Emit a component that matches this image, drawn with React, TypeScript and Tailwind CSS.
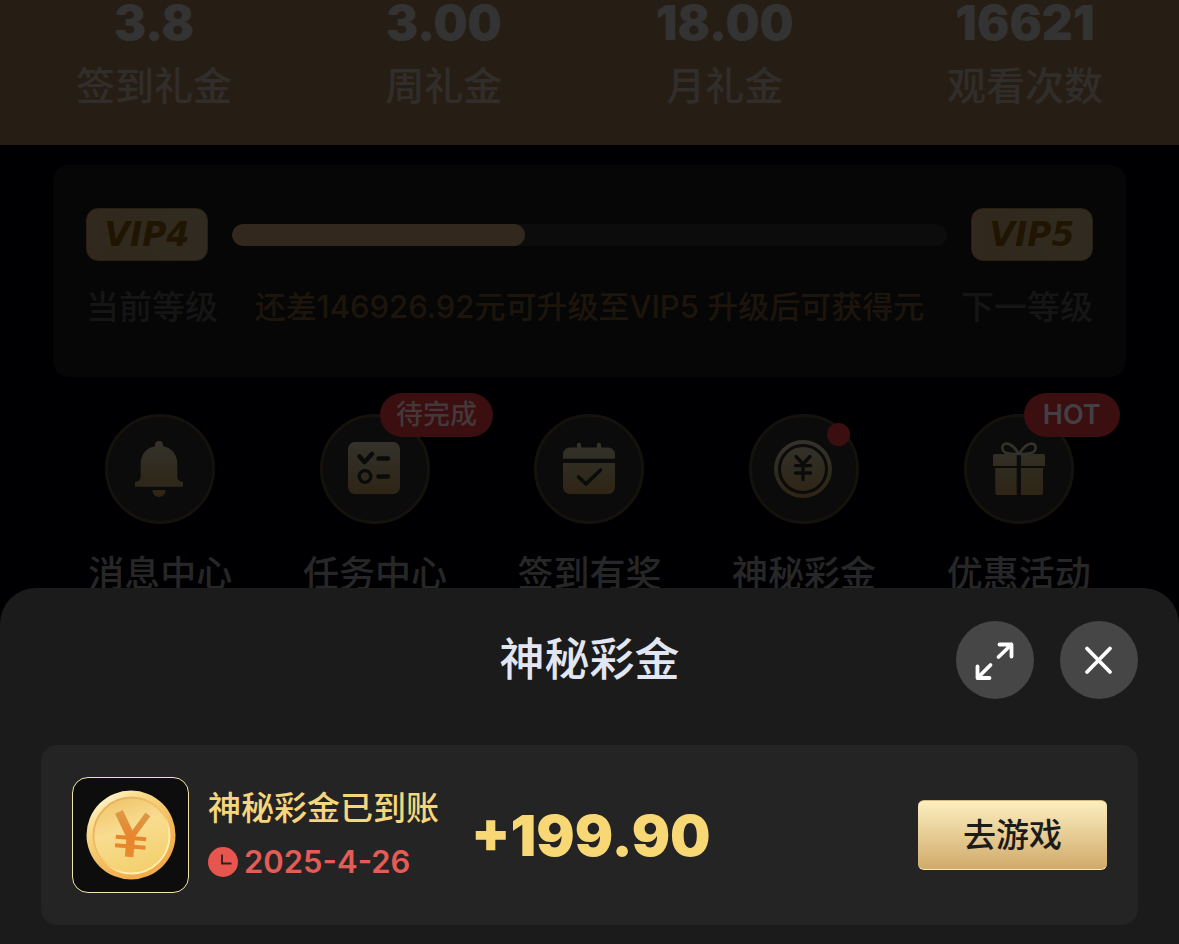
import React from "react";
import { clsx } from "clsx";

interface StatItem {
    value: string;
    label: string;
}

interface MenuItem {
    label: string;
    icon: React.ReactNode;
    badge?: string;
    dot?: boolean;
}

const stats: StatItem[] = [
    { value: "3.8", label: "签到礼金" },
    { value: "3.00", label: "周礼金" },
    { value: "18.00", label: "月礼金" },
    { value: "16621", label: "观看次数" },
];

const GOLD = "url(#menu-gold)";
const CUT = "#0b0b0b";

// Shared gradient, spans the same height in every menu icon
function MenuIcon({ children }: { children: React.ReactNode }) {
    return (
        <svg viewBox="3 3 104 104" className="size-full" aria-hidden="true">
            <defs>
                <linearGradient id="menu-gold" gradientUnits="userSpaceOnUse" x1="0" y1="28" x2="0" y2="82">
                    <stop offset="0" stopColor="#34322b" />
                    <stop offset="0.6" stopColor="#2f2a1d" />
                    <stop offset="1" stopColor="#302415" />
                </linearGradient>
            </defs>
            {children}
        </svg>
    );
}

function BellIcon() {
    return (
        <MenuIcon>
            <path
                fill={GOLD}
                d="M54 27a4 4 0 0 1 4 4v1.2c8.500 1.600 14.300 8.300 14.300 17V62c0 3.500 1.500 5.500 5.700 6v4.700H30V68c4.200-.5 5.700-2.500 5.700-6V49.200c0-8.700 5.800-15.400 14.300-17V31a4 4 0 0 1 4-4z"
            />
            <path fill={GOLD} d="M47.300 76h13.400a6.700 7 0 0 1-13.400 0z" />
        </MenuIcon>
    );
}

function TaskIcon() {
    return (
        <MenuIcon>
            <rect x="28" y="28" width="52" height="52" rx="7" fill={GOLD} />
            <g fill="none" stroke={CUT} strokeWidth="4.5" strokeLinecap="round" strokeLinejoin="round">
                <path d="M39.500 42.500l5 5.500 7.500-8M58.500 44.500h9.500M58.500 62.500h9.500" />
                <circle cx="45" cy="62.500" r="5.800" strokeWidth="3.300" />
            </g>
        </MenuIcon>
    );
}

function CalendarIcon() {
    return (
        <MenuIcon>
            <path d="M45 31v5M65 31v5" stroke="#34322b" strokeWidth="4.300" strokeLinecap="round" />
            <path fill={GOLD} d="M36 33.500h38a7 7 0 0 1 7 7v4.200H29v-4.200a7 7 0 0 1 7-7zM29 49h52v24a7 7 0 0 1-7 7H36a7 7 0 0 1-7-7z" />
            <path
                d="M44.500 63l7.500 7 14.500-14"
                fill="none"
                stroke={CUT}
                strokeWidth="3.600"
                strokeLinecap="round"
                strokeLinejoin="round"
            />
        </MenuIcon>
    );
}

function BonusIcon() {
    return (
        <MenuIcon>
            <circle cx="54" cy="55" r="29" fill={GOLD} />
            <g fill="none" stroke={CUT} strokeWidth="3" strokeLinecap="round" strokeLinejoin="round">
                <circle cx="54" cy="55" r="23.500" />
                <path d="M47 42.500l7 7.500 7-7.500M46.500 51.700h15M46.500 59h15M54 50v15.500" strokeWidth="3.300" />
            </g>
        </MenuIcon>
    );
}

function GiftIcon() {
    return (
        <MenuIcon>
            <path
                d="M55 40c-5-8-10-10.800-13.500-10.300-3.700.6-4.300 6-1 8.300C43.500 40 50 40 55 40zM55 40c5-8 10-10.800 13.500-10.300 3.700.6 4.300 6 1 8.300C66.500 40 60 40 55 40z"
                fill="none"
                stroke="#34322b"
                strokeWidth="2.600"
            />
            <path
                fill={GOLD}
                d="M31 40h21.700v12H29V42a2 2 0 0 1 2-2zM57 40h22a2 2 0 0 1 2 2v10H57zM31.300 54h21.400v27H33.300a2 2 0 0 1-2-2zM57 54h22v25a2 2 0 0 1-2 2H57z"
            />
        </MenuIcon>
    );
}

function CoinIcon() {
    return (
        <svg viewBox="0 0 90 90" className="size-[90px]" aria-hidden="true">
            <defs>
                <linearGradient id="coin-rim" x1="0.2" y1="0.05" x2="0.8" y2="0.95">
                    <stop offset="0" stopColor="#fff6cf" />
                    <stop offset="0.2" stopColor="#f9dc8c" />
                    <stop offset="0.6" stopColor="#f3bb5c" />
                    <stop offset="1" stopColor="#f2a848" />
                </linearGradient>
                <linearGradient id="coin-edge" x1="0.15" y1="0.1" x2="0.85" y2="0.9">
                    <stop offset="0" stopColor="#e9ae5a" />
                    <stop offset="0.55" stopColor="#f3c46c" />
                    <stop offset="0.8" stopColor="#fff3b8" />
                    <stop offset="1" stopColor="#fff0b0" />
                </linearGradient>
                <linearGradient id="coin-face" x1="0.3" y1="0" x2="0.65" y2="1">
                    <stop offset="0" stopColor="#f1c56c" />
                    <stop offset="0.4" stopColor="#f8dc90" />
                    <stop offset="1" stopColor="#f3d06b" />
                </linearGradient>
                <linearGradient id="coin-sign" gradientUnits="userSpaceOnUse" x1="45" y1="22" x2="45" y2="68">
                    <stop offset="0" stopColor="#dc9a45" />
                    <stop offset="0.55" stopColor="#e8842c" />
                    <stop offset="1" stopColor="#ea8a2e" />
                </linearGradient>
            </defs>
            <circle cx="45" cy="45" r="44.500" fill="url(#coin-rim)" />
            <circle cx="45.500" cy="45.500" r="38" fill="url(#coin-face)" stroke="url(#coin-edge)" strokeWidth="1.800" />
            <g fill="none" stroke="url(#coin-sign)" transform="rotate(5 45 45)">
                <path d="M31 23L44.500 46" strokeWidth="8.500" />
                <path d="M60 23L46 46" strokeWidth="6" />
                <path d="M45 42v25" strokeWidth="8.500" />
                <path d="M30 48h30.500M30 56.500h30.500" strokeWidth="4" />
            </g>
        </svg>
    );
}

function ClockIcon() {
    return (
        <svg viewBox="0 0 30 30" className="size-[30px]" aria-hidden="true">
            <circle cx="15" cy="15" r="15" fill="#e8554f" />
            <path d="M14 7.500V16.500h9.500" fill="none" stroke="#242424" strokeWidth="1.800" />
        </svg>
    );
}

const menus: MenuItem[] = [
    { label: "消息中心", icon: <BellIcon /> },
    { label: "任务中心", icon: <TaskIcon />, badge: "待完成" },
    { label: "签到有奖", icon: <CalendarIcon /> },
    { label: "神秘彩金", icon: <BonusIcon />, dot: true },
    { label: "优惠活动", icon: <GiftIcon />, badge: "HOT" },
];

function VipBadge({ level }: { level: number }) {
    return (
        <span className="flex h-[53px] w-[122px] shrink-0 items-center justify-center rounded-xl border border-[#2a2012] bg-linear-to-r from-[#32281d] to-[#302b20] font-['DejaVu_Sans'] text-[33px] leading-none font-bold text-[#1f1502] italic">
            VIP{level}
        </span>
    );
}

function BonusSheet() {
    return (
        <section
            role="dialog"
            aria-labelledby="sheet-title"
            className="fixed inset-x-0 bottom-0 rounded-t-[36px] bg-[#1b1b1b] px-[41px] pt-[33px] pb-[19px]"
        >
            <header className="grid grid-cols-[1fr_auto_1fr] items-center">
                <h2 id="sheet-title" className="col-start-2 text-[45px] leading-[78px] font-medium text-[#e2e6f2]">
                    神秘彩金
                </h2>
                <div className="flex justify-end gap-[26px]">
                    <button type="button" aria-label="展开" className="size-[78px] rounded-full bg-[#464646]">
                        <svg viewBox="0 0 78 78" fill="none" stroke="#fff" strokeWidth="3.800" strokeLinecap="round" strokeLinejoin="round">
                            <path d="M43.500 23.500h12v12M55.500 23.500L42.500 36M21.500 45.500V57h12M21.500 57L34.500 44" />
                        </svg>
                    </button>
                    <button type="button" aria-label="关闭" className="size-[78px] rounded-full bg-[#464646]">
                        <svg viewBox="0 0 78 78" fill="none" stroke="#fff" strokeWidth="3.800" strokeLinecap="round">
                            <path d="M27 27.500L50 51M50 27.500L27 51" />
                        </svg>
                    </button>
                </div>
            </header>

            <div className="mt-[46px] flex items-center rounded-2xl bg-[#242424] px-[31px] py-8">
                <div className="flex h-[116px] w-[117px] items-center justify-center rounded-2xl border border-[#f3e6ac] bg-[#0d0d0d]">
                    <CoinIcon />
                </div>
                <div className="ml-[19px]">
                    <p className="text-[33px] leading-[54px] font-medium text-[#f5d67c]">神秘彩金已到账</p>
                    <p className="flex items-center gap-1.5 text-[31px] leading-[54px] font-semibold text-[#e45c56]">
                        <ClockIcon />
                        <time dateTime="2025-04-26">2025-4-26</time>
                    </p>
                </div>
                <strong className="ml-8 text-[57px] leading-none font-black text-[#f8d775]">+199.90</strong>
                <button
                    type="button"
                    className="ml-auto h-[70px] w-[189px] rounded-md border-y border-t-[#d8b878] border-b-[#f7eab8] bg-linear-to-b from-[#fcefc0] to-[#d0aa69] text-[33px] leading-none font-medium text-[#1b1b1b]"
                >
                    去游戏
                </button>
            </div>
        </section>
    );
}

export default function App() {
    return (
        <div className="min-h-screen bg-[#000002] font-['Inter','Noto_Sans_CJK_SC',sans-serif]">
            <header className="flex justify-between bg-[#261e14] px-[76px] pb-[29px] text-center">
                {stats.map((item) => (
                    <div key={item.label}>
                        <div className="text-[48px] leading-[46px] font-black text-[#333333]">{item.value}</div>
                        <div className="mt-2.5 text-[39px] leading-[60px] font-medium text-[#312d2a]">{item.label}</div>
                    </div>
                ))}
            </header>

            <main className="mx-[53px]">
                {/* Level progress */}
                <section className="mt-5 rounded-2xl bg-[#060606] px-[33px] pt-[43px] pb-[43px]">
                    <div className="flex items-center gap-6">
                        <VipBadge level={4} />
                        <div className="h-[22px] flex-1 overflow-hidden rounded-full bg-[#0c0c0c]">
                            <div className="h-full w-[41%] rounded-full bg-[#32281e]" />
                        </div>
                        <VipBadge level={5} />
                    </div>
                    <div className="mt-[19px] flex items-center justify-between text-[33px] leading-[54px] font-medium whitespace-nowrap text-[#151515]">
                        <span>当前等级</span>
                        <span className="text-[31px] text-[#1d150c]">还差146926.92元可升级至VIP5 升级后可获得元</span>
                        <span>下一等级</span>
                    </div>
                </section>

                {/* Shortcuts */}
                <nav className="mt-[37px] grid grid-cols-5">
                    {menus.map((item) => (
                        <a key={item.label} href="#" className="flex flex-col items-center">
                            <span className="relative size-[110px] rounded-full border-3 border-[#15120d] bg-[#0b0b0b]">
                                {item.icon}
                                {item.badge && (
                                    <span
                                        className={clsx(
                                            "absolute -top-6 left-[57px] min-w-24 rounded-full bg-[#3b0e10] px-4 text-center text-[27px] leading-[44px] whitespace-nowrap",
                                            item.badge === "HOT" ? "font-semibold text-[#414145]" : "font-medium text-[#43393a]"
                                        )}
                                    >
                                        {item.badge}
                                    </span>
                                )}
                                {item.dot && <span className="absolute top-1.5 left-[75px] size-[23px] rounded-full bg-[#3b0e10]" />}
                            </span>
                            <span className="mt-5 text-[36px] leading-[60px] font-medium text-[#272727]">{item.label}</span>
                        </a>
                    ))}
                </nav>
            </main>

            <BonusSheet />
        </div>
    );
}
